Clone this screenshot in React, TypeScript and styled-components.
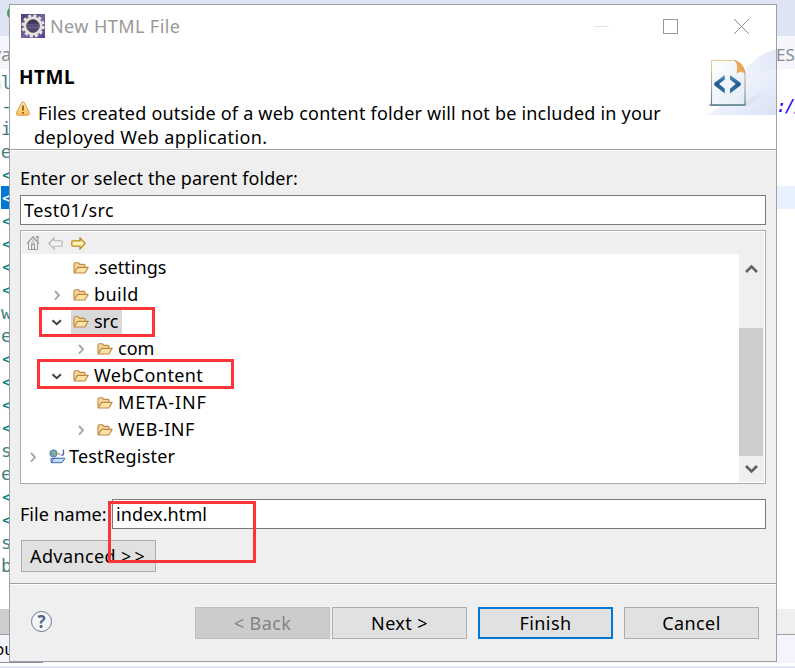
import React from "react";
import styled, { createGlobalStyle, css } from "styled-components";

const GlobalStyle = createGlobalStyle`
  * { box-sizing: border-box; }
  body { margin: 0; overflow: hidden; background: #fff; }
  svg { display: block; flex: none; }
`;

/* ---------- editor behind the dialog ---------- */
const Desktop = styled.div`
  position: relative;
  width: 795px;
  height: 668px;
  overflow: hidden;
  background: #fff;
  font-family: "Noto Sans", sans-serif;
  font-size: 18px;
  color: #000;
`;
const TopStrip = styled.div`
  height: 36px;
  padding: 6px 0 0 7px;
  background: #dfe4f5;
`;
const GreenDot = styled.div`
  width: 14px;
  height: 14px;
  border-radius: 50%;
  background: #3c9a4c;
`;
const TabStrip = styled.div`
  display: flex;
  justify-content: space-between;
  height: 35px;
  padding: 0 0 2px;
  line-height: 37px;
  color: #8a8a8e;
  background: linear-gradient(#f4f6fc 33px, #fff 33px);
`;
const TabLeft = styled.span`
  margin-left: -8px;
`;
const TabRight = styled.span`
  width: 19px;
  font-size: 17px;
`;
const Editor = styled.div`
  height: 538px;
`;
const CodeLine = styled.div<{ $selected?: boolean }>`
  display: flex;
  justify-content: space-between;
  height: 23px;
  line-height: 23px;
  white-space: pre;
  font-family: "DejaVu Sans Mono", monospace;
  font-size: 18px;
  color: #3f7f7f;
  ${(p) => p.$selected && css`
    background: linear-gradient(90deg, #fff 1px, #0078d7 1px, #0078d7 10px, #e8f2fe 10px);
    color: #fff;
  `}
`;
const CodeTail = styled.span<{ $bracket?: boolean; $pair?: boolean; $selected?: boolean }>`
  margin-left: ${(p) => (p.$pair ? -10 : p.$bracket ? 2 : 1)}px;
  color: ${(p) => (p.$selected ? "#fff" : p.$bracket ? "#008080" : "inherit")};
`;
const Url = styled.span`
  width: 19px;
  font-style: italic;
  letter-spacing: -2px;
  color: #2a00ff;
`;
const EditorScroll = styled.div`
  height: 25px;
  background: linear-gradient(90deg, #cdcdcd 400px, #efefef 400px);
`;
const BottomTabs = styled.div`
  display: flex;
  height: 29px;
  border-top: 1px solid #a0a0a0;
  line-height: 28px;
  background: linear-gradient(90deg, #f4f5fc 100%, #fff 0);
`;
const BottomTab = styled.div`
  width: 43px;
  height: 28px;
  border-bottom: 1px solid #8f8f99;
  text-indent: -6px;
  font-size: 17px;
`;
const Footer = styled.div`
  height: 5px;
  background: linear-gradient(#fff 3px, #e0e4f5 3px);
`;

/* ---------- dialog ---------- */
const Dialog = styled.div`
  position: absolute;
  left: 9px;
  top: 4px;
  width: 768px;
  height: 658px;
  display: flex;
  flex-direction: column;
  border: 1px solid #9ea0a8;
  background: #efefef;
`;
const Text = styled.span<{ $ls?: number }>`
  white-space: pre;
  letter-spacing: ${(p) => p.$ls ?? 0}px;
`;
const TitleBar = styled.div`
  display: flex;
  align-items: center;
  height: 42px;
  padding-left: 11px;
  background: #fff;
  color: #999;
`;
const Title = styled(Text)`
  flex: 1;
  margin-left: 5px;
  line-height: 24px;
  padding-bottom: 1px;
`;
const WindowControls = styled.div`
  display: flex;
  gap: 54px;
  margin-right: 27px;
  svg:nth-child(3) { margin-left: 2px; }
`;
const Banner = styled.div`
  display: flex;
  height: 103px;
  background: #fff;
  border-bottom: 1px solid #a0a0a0;
`;
const BannerText = styled.div`
  flex: 1;
`;
const Heading = styled.div`
  height: 49px;
  padding: 13px 0 0 9px;
  line-height: 34px;
  font-size: 19px;
  font-weight: 700;
  letter-spacing: 0.5px;
`;
const Message = styled.div`
  display: grid;
  grid-template-columns: 24px 1fr;
  line-height: 24px;
  padding-top: 5px;
`;
const MessageIcon = styled.div`
  padding: 0 0 0 5px;
`;
const MessageBody = styled.div`
  display: flex;
  flex-direction: column;
`;
const FirstLine = styled(Text)`
  margin-left: 4px;
`;
const BannerArt = styled.div`
  width: 76px;
`;
const Body = styled.div`
  height: 433px;
  border-top: 1px solid #fff;
  padding: 12px 10px 0 10px;
  display: flex;
  flex-direction: column;
`;
const FieldLabel = styled.div`
  height: 32px;
  line-height: 31px;
`;
const Input = styled.div`
  height: 30px;
  flex: 1;
  flex-shrink: 0;
  padding-left: 3px;
  border: 1px solid #7a7a7a;
  background: #fff;
  line-height: 28px;
`;
const FolderRow = styled.div`
  display: flex;
  height: 30px;
`;
const TreeBox = styled.div`
  height: 254px;
  margin-top: 5px;
  padding: 1px;
  border: 1px solid #abadb3;
  background: #fff;
`;
const Toolbar = styled.div`
  display: flex;
  align-items: center;
  height: 22px;
  padding-left: 4px;
  background: #efefef;
`;
const TreeArea = styled.div`
  display: flex;
  height: 228px;
  overflow: hidden;
`;
const Tree = styled.div`
  flex: 1;
`;
const TreeRow = styled.div<{ $depth: number }>`
  display: flex;
  align-items: center;
  height: 27px;
  padding-left: ${(p) => 3 + p.$depth * 24}px;
`;
const Twisty = styled.div`
  width: 14px;
  margin-right: 8px;
`;
const NodeBody = styled.div<{ $selected?: boolean }>`
  display: flex;
  align-items: center;
  height: 24px;
  padding: 0 4px 0 2px;
  line-height: 24px;
  background: ${(p) => (p.$selected ? "#d9d9d9" : "transparent")};
`;
const NodeLabel = styled(Text)<{ $project?: boolean }>`
  margin: ${(p) => (p.$project ? "-2px 0 0 3px" : "-2px 0 0 5px")};
`;
const ScrollTrack = styled.div`
  display: flex;
  flex-direction: column;
  align-items: center;
  width: 25px;
  padding: 10px 0 8px;
  background: #efefef;
`;
const ScrollThumb = styled.div`
  width: 24px;
  height: 128px;
  margin: 54px 1px 8px 0;
  background: #cdcdcd;
`;
const FileRow = styled.div`
  display: flex;
  height: 30px;
  margin-top: 15px;
  line-height: 30px;
`;
const FileLabel = styled.div`
  width: 92px;
`;
const Button = styled.div<{ $kind?: "default" | "disabled" }>`
  width: 135px;
  height: 32px;
  border: 1px solid #adadad;
  background: #e1e1e1;
  text-align: center;
  line-height: 30px;
  white-space: pre;
  letter-spacing: 0.4px;
  ${(p) => p.$kind === "default" && css`
    border: 2px solid #0078d7;
    line-height: 28px;
  `}
  ${(p) => p.$kind === "disabled" && css`
    border-color: #bfbfbf;
    background: #ccc;
    color: #838383;
  `}
`;
const AdvancedButton = styled(Button)`
  margin: 11px 0 0 1px;
  padding-left: 8px;
  text-align: left;
`;
const ButtonBar = styled.div`
  display: flex;
  align-items: flex-start;
  height: 78px;
  padding: 23px 17px 0 20px;
  border-top: 1px solid #a0a0a0;
  box-shadow: inset 0 1px #fff;
`;
const HelpSlot = styled.div`
  flex: 1;
  padding-top: 4px;
`;
const PairGap = styled.div`
  display: flex;
  gap: 2px;
`;
const ButtonGroup = styled.div`
  display: flex;
  gap: 11px;
`;

const Mark = styled.div<{ $x: number; $y: number; $w: number; $h: number }>`
  position: absolute;
  left: ${(p) => p.$x}px;
  top: ${(p) => p.$y}px;
  width: ${(p) => p.$w}px;
  height: ${(p) => p.$h}px;
  border: 3px solid #fd3538;
`;

/* ---------- icons ---------- */
const GearIcon = () => (
  <svg width="24" height="24" viewBox="0 0 24 24">
    <defs>
      <linearGradient id="gbg" x1="0" y1="0" x2="1" y2="1">
        <stop offset="0" stopColor="#4c3c78" /><stop offset=".55" stopColor="#76649f" /><stop offset="1" stopColor="#5a3f92" />
      </linearGradient>
      <linearGradient id="gin" x1="0" y1="0" x2="0" y2="1">
        <stop offset="0" stopColor="#24213a" /><stop offset=".6" stopColor="#5b5382" /><stop offset="1" stopColor="#383052" />
      </linearGradient>
    </defs>
    <rect width="24" height="24" fill="url(#gbg)" />
    <circle cx="12" cy="12" r="10.2" fill="none" stroke="#e6e2de" strokeWidth="2.8" strokeDasharray="3.2 2.141" />
    <circle cx="12" cy="12" r="8" fill="url(#gin)" stroke="#e6e2de" strokeWidth="3" />
    <circle cx="12" cy="12" r="6.3" fill="none" stroke="#57545f" strokeWidth=".9" />
    <path d="M6 10.5h12M6 13h12" stroke="#8c83ad" strokeWidth=".6" opacity=".5" />
  </svg>
);
const MinimizeIcon = () => <svg width="15" height="15"><path d="M0 7.5h15" stroke="#e3e3e3" /></svg>;
const MaximizeIcon = () => <svg width="15" height="15"><rect x=".5" y=".5" width="14" height="14" fill="none" stroke="#999" /></svg>;
const CloseIcon = () => <svg width="15" height="15"><path d="M0 0l15 15M15 0L0 15" stroke="#8c8c8c" /></svg>;

const WarningIcon = () => (
  <svg width="16" height="16" viewBox="0 0 16 16">
    <defs>
      <linearGradient id="wg" x1="0" y1="0" x2="0" y2="1">
        <stop offset="0" stopColor="#fff0c4" /><stop offset="1" stopColor="#f8bd4b" />
      </linearGradient>
    </defs>
    <path d="M6.8 1.5Q8 0 9.2 1.5L14.2 11.2Q15 14.3 12.5 14.3H3.2Q.8 14.3 1.5 11.4Z" fill="url(#wg)" stroke="#d99b4a" />
    <path d="M8 4.4v5M8 11v1.8" stroke="#76501a" strokeWidth="1.6" />
  </svg>
);
const HtmlArt = () => (
  <svg width="76" height="70" viewBox="0 0 76 70">
    <defs>
      <linearGradient id="sky" x1="0" x2="1"><stop offset="0" stopColor="#fff" /><stop offset=".55" stopColor="#f0f3fc" /><stop offset="1" stopColor="#e2e9f9" /></linearGradient>
      <linearGradient id="sky2" x1="0" x2="1" y1=".2" y2="1"><stop offset="0" stopColor="#fbfcff" /><stop offset="1" stopColor="#d9e2f6" /></linearGradient>
      <linearGradient id="pg" x1="0" y1="0" x2="1" y2="1"><stop offset="0" stopColor="#fff" /><stop offset="1" stopColor="#e2ebf6" /></linearGradient>
      <linearGradient id="pe" x1="0" y1="0" x2="0" y2="1"><stop offset="0" stopColor="#f0c894" /><stop offset=".6" stopColor="#9aa99b" /><stop offset="1" stopColor="#4e7c80" /></linearGradient>
      <linearGradient id="sh" x1="0" x2="1"><stop offset="0" stopColor="#b3b1c7" /><stop offset="1" stopColor="#dde1f0" stopOpacity=".25" /></linearGradient>
      <linearGradient id="br" x1="0" y1="0" x2="0" y2="1"><stop offset="0" stopColor="#4d9bc9" /><stop offset=".5" stopColor="#24588f" /><stop offset="1" stopColor="#397fae" /></linearGradient>
    </defs>
    <path d="M5 68C28 60 38 12 76 2V68Z" fill="url(#sky)" />
    <path d="M5 68C30 62 40 25 76 23V68Z" fill="url(#sky2)" />
    <path d="M46 54L64 42V49L48 59H9V57Z" fill="url(#sh)" />
    <path d="M11.5 13.5H35.5Q44 18 45 27V58H11.5Z" fill="url(#pg)" stroke="url(#pe)" strokeWidth="1.1" />
    <path d="M11 58H45.5" stroke="#4f7e81" strokeWidth="1.1" />
    <path d="M35 13.5Q44 17 45 26.5Q41 22.5 37 26Q39 18 35 13.5Z" fill="#f0a84e" stroke="#dd9745" strokeWidth=".6" />
    <path d="M24.8 27.9V32.5L19 37L24.8 41.8V46.5L14.2 38.2V36.1Z" fill="url(#br)" />
    <path d="M30 27.9V32.5L35.8 37L30 41.8V46.5L40.8 38.2V36.1Z" fill="url(#br)" />
  </svg>
);
const HomeIcon = () => (
  <svg width="14" height="16" viewBox="0 0 14 16">
    <path d="M1 8.5L7 2L13 8.5M10.5 3V1.5H12V6" fill="none" stroke="#999" strokeWidth="1.2" />
    <path d="M2.5 7.5V14.5H11.5V7.5M7 4.5V6.5" fill="none" stroke="#999" />
    <path d="M5.5 14V9.5H8.5V14M5 8h4" fill="#e4e4e4" stroke="#999" />
  </svg>
);
const ArrowShape = styled.svg`
  margin-left: 8px;
`;
const BackIcon = () => (
  <ArrowShape width="15" height="13" viewBox="0 0 15 13">
    <path d="M.8 6.5L6 1V3.8H12.5Q14.2 3.8 14.2 5V8Q14.2 9.2 12.5 9.2H6V12Z" fill="#f2f2f2" stroke="#b4b4b4" strokeWidth="1.1" />
  </ArrowShape>
);
const ForwardIcon = () => (
  <ArrowShape width="15" height="13" viewBox="0 0 15 13">
    <path d="M14.2 6.5L9 1V3.8H2.5Q.8 3.8 .8 5V8Q.8 9.2 2.5 9.2H9V12Z" fill="#fff3b8" stroke="#bd8a1d" strokeWidth="1.3" />
  </ArrowShape>
);
const FolderIcon = () => (
  <svg width="16" height="14" viewBox="0 0 16 14">
    <path d="M1 11.5V3.2Q1 1.8 2.3 1.8H5.5L6.8 3.4H11Q12 3.4 12 4.4V6" fill="#f6d794" stroke="#bf8744" strokeWidth="1.1" />
    <path d="M1.2 12L4.6 6.4H15.2L11.8 12Z" fill="#fde3a6" stroke="#bf8744" strokeWidth="1.1" strokeLinejoin="round" />
  </svg>
);
const ProjectIcon = () => (
  <svg width="17" height="16" viewBox="0 0 17 16">
    <circle cx="4.5" cy="4.5" r="3.7" fill="#6d9fc0" stroke="#4a719b" strokeWidth=".7" />
    <path d="M2 3Q4 1 5 2.7T7 5Q5 7.5 4.2 5.2T2 3Z" fill="#9ab765" />
    <path d="M14.5 .5V4.5Q14.5 6.5 12.3 6" fill="none" stroke="#4263a4" strokeWidth="1.3" />
    <path d="M9.5 4l1.5 2" stroke="#d39b4c" strokeWidth="1.6" />
    <path d="M2 13V9.5H10.5V11" fill="#d8e9fa" stroke="#4068b0" />
    <path d="M2.2 13.7L5 9.2H16L13 13.7Z" fill="#c0e1fb" stroke="#3b62b0" strokeLinejoin="round" />
  </svg>
);
const ClosedIcon = () => <svg width="14" height="14"><path d="M6 3L10 7.3L6 11.6" fill="none" stroke="#a6a6a6" strokeWidth="1.9" /></svg>;
const OpenIcon = () => <svg width="14" height="14"><path d="M3.5 5.2L7.7 9.2L11.9 5.2" fill="none" stroke="#404040" strokeWidth="2" /></svg>;
const ScrollUp = () => <svg width="13" height="10"><path d="M1 8L6.5 2.5L12 8" fill="none" stroke="#606060" strokeWidth="2.6" /></svg>;
const ScrollDown = () => <svg width="13" height="10"><path d="M1 2L6.5 7.5L12 2" fill="none" stroke="#606060" strokeWidth="2.6" /></svg>;
const HelpMark = styled.div`
  display: grid;
  place-items: center;
  width: 21px;
  height: 21px;
  margin-left: 1px;
  border: 1.4px solid #6b7890;
  border-radius: 50%;
  background: #f4f5f8;
  color: #536480;
  font: bold 17px/18px "Open Sans", sans-serif;
`;

/* ---------- data ---------- */
type Node = { label: string; depth: number; state?: "open" | "closed"; selected?: boolean; project?: boolean; ls?: number };
const nodes: Node[] = [
  { label: ".settings", depth: 1, ls: 0.05 },
  { label: "build", depth: 1, state: "closed", ls: 0.45 },
  { label: "src", depth: 1, state: "open", selected: true },
  { label: "com", depth: 2, state: "closed" },
  { label: "WebContent", depth: 1, state: "open", ls: 0.4 },
  { label: "META-INF", depth: 2, ls: 0.9 },
  { label: "WEB-INF", depth: 2, state: "closed", ls: 0.5 },
  { label: "TestRegister", depth: 0, state: "closed", project: true, ls: 0.2 },
];
const code = ["ml", "-", "i", "ve", "<", "<", "<", "<", "<", "<", "w", "e", "<", "<", "<", "<", "s", "e", "<", "<", "s", "b"];

export default function App() {
  return (
    <>
      <GlobalStyle />
      <Desktop>
        <TopStrip><GreenDot /></TopStrip>
        <TabStrip><TabLeft>va</TabLeft><TabRight>ES</TabRight></TabStrip>
        <Editor>
          {code.map((c, i) => (
            <CodeLine key={i} $selected={i === 5}>
              <CodeTail $bracket={c === "<"} $pair={c.length > 1} $selected={i === 5}>{c}</CodeTail>
              {i === 1 && <Url>://</Url>}
            </CodeLine>
          ))}
        </Editor>
        <EditorScroll />
        <BottomTabs><BottomTab>ou</BottomTab></BottomTabs>
        <Footer />

        <Dialog>
          <TitleBar>
            <GearIcon />
            <Title $ls={0.42}>New HTML File</Title>
            <WindowControls><MinimizeIcon /><MaximizeIcon /><CloseIcon /></WindowControls>
          </TitleBar>
          <Banner>
            <BannerText>
              <Heading>HTML</Heading>
              <Message>
                <MessageIcon><WarningIcon /></MessageIcon>
                <MessageBody>
                  <FirstLine $ls={0.21}>Files created outside of a web content folder will not be included in your</FirstLine>
                  <Text $ls={0.42}>deployed Web application.</Text>
                </MessageBody>
              </Message>
            </BannerText>
            <BannerArt><HtmlArt /></BannerArt>
          </Banner>
          <Body>
            <FieldLabel><Text $ls={0.1}>Enter or select the parent folder:</Text></FieldLabel>
            <FolderRow><Input><Text $ls={0.45}>Test01/src</Text></Input></FolderRow>
            <TreeBox>
              <Toolbar><HomeIcon /><BackIcon /><ForwardIcon /></Toolbar>
              <TreeArea>
                <Tree>
                  {nodes.map((n) => (
                    <TreeRow key={n.label} $depth={n.depth}>
                      <Twisty>{n.state === "open" ? <OpenIcon /> : n.state === "closed" ? <ClosedIcon /> : null}</Twisty>
                      <NodeBody $selected={n.selected}>
                        {n.project ? <ProjectIcon /> : <FolderIcon />}
                        <NodeLabel $ls={n.ls} $project={n.project}>{n.label}</NodeLabel>
                      </NodeBody>
                    </TreeRow>
                  ))}
                </Tree>
                <ScrollTrack><ScrollUp /><ScrollThumb /><ScrollDown /></ScrollTrack>
              </TreeArea>
            </TreeBox>
            <FileRow>
              <FileLabel>File name:</FileLabel>
              <Input><Text $ls={0.1}>index.html</Text></Input>
            </FileRow>
            <AdvancedButton><Text $ls={0.4}>{"Advanced "}</Text><Text $ls={3}>{">>"}</Text></AdvancedButton>
          </Body>
          <ButtonBar>
            <HelpSlot><HelpMark>?</HelpMark></HelpSlot>
            <ButtonGroup>
              <PairGap>
                <Button $kind="disabled">{"< Back"}</Button>
                <Button>{"Next >"}</Button>
              </PairGap>
              <Button $kind="default">Finish</Button>
              <Button>Cancel</Button>
            </ButtonGroup>
          </ButtonBar>
        </Dialog>

        <Mark $x={39} $y={307} $w={116} $h={30} />
        <Mark $x={37} $y={359} $w={197} $h={30} />
        <Mark $x={108} $y={501} $w={148} $h={62} />
      </Desktop>
    </>
  );
}
